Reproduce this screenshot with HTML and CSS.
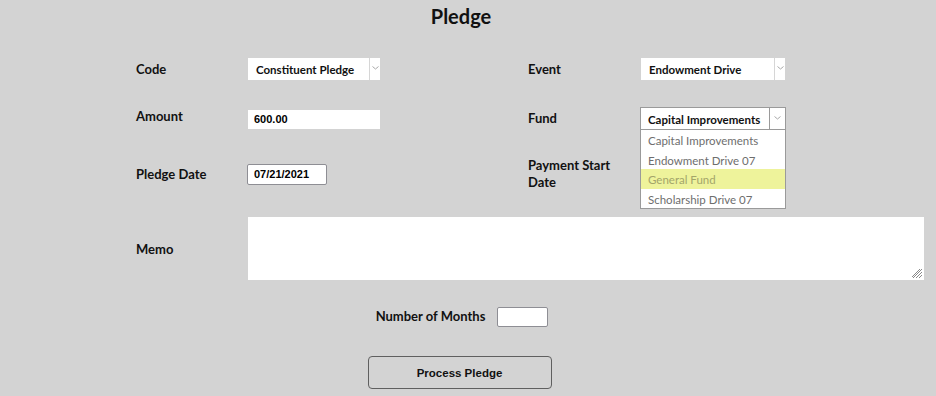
FILE: index.html
```html
<!DOCTYPE html>
<html lang="en">
<head>
    <meta charset="UTF-8">
    <title>Pledge</title>
    <link rel="stylesheet" href="styles.css">
</head>
<body>
    <div class="page">
        <h1 class="title">Pledge</h1>

        <!-- Code / Event -->
        <div class="row row-code">
            <div class="pair">
                <label class="label">Code</label>
                <div class="select select-code">
                    <span class="select-text">Constituent Pledge</span>
                    <span class="select-arrow"><svg width="7" height="4" viewBox="0 0 7 4"><path d="M0.5 0.5 L3.5 3 L6.5 0.5" fill="none" stroke="#a9a9a9" stroke-width="1"/></svg></span>
                </div>
            </div>
            <div class="pair">
                <label class="label">Event</label>
                <div class="select select-event">
                    <span class="select-text">Endowment Drive</span>
                    <span class="select-arrow"><svg width="7" height="4" viewBox="0 0 7 4"><path d="M0.5 0.5 L3.5 3 L6.5 0.5" fill="none" stroke="#a9a9a9" stroke-width="1"/></svg></span>
                </div>
            </div>
        </div>

        <!-- Amount / Fund -->
        <div class="row row-amount">
            <div class="pair">
                <label class="label label-high">Amount</label>
                <input class="text-input amount" type="text" value="600.00">
            </div>
            <div class="pair">
                <label class="label">Fund</label>
                <div class="fund-wrap">
                    <div class="select select-fund">
                        <span class="select-text">Capital Improvements</span>
                        <span class="select-arrow"><svg width="7" height="4" viewBox="0 0 7 4"><path d="M0.5 0.5 L3.5 3 L6.5 0.5" fill="none" stroke="#a9a9a9" stroke-width="1"/></svg></span>
                    </div>
                    <ul class="dropdown">
                        <li>Capital Improvements</li>
                        <li>Endowment Drive 07</li>
                        <li class="active">General Fund</li>
                        <li>Scholarship Drive 07</li>
                    </ul>
                </div>
            </div>
        </div>

        <!-- Pledge Date / Payment Start Date -->
        <div class="row row-date">
            <div class="pair">
                <label class="label">Pledge Date</label>
                <input class="text-input date" type="text" value="07/21/2021">
            </div>
            <div class="pair">
                <label class="label">Payment Start<br>Date</label>
            </div>
        </div>

        <!-- Memo -->
        <div class="row row-memo">
            <label class="label">Memo</label>
            <div class="memo-box">
                <textarea class="memo"></textarea>
                <svg class="grip" width="12" height="12" viewBox="0 0 12 12">
                    <path d="M11 2 L2 11 M11 5 L5 11 M11 8 L8 11 M9 2 L1 10" fill="none" stroke="#8a8a8a" stroke-width="1"/>
                </svg>
            </div>
        </div>

        <div class="months">
            <label class="label">Number of Months</label>
            <input class="text-input months-input" type="text">
        </div>

        <div class="actions">
            <button class="btn">Process Pledge</button>
        </div>
    </div>
</body>
</html>
```

FILE: styles.css
```css
/* Basic Reset */
* {
    margin: 0;
    padding: 0;
    box-sizing: border-box;
}

body {
    background-color: #d3d3d3;
    font-family: Lato, "DejaVu Sans", sans-serif;
    color: #111;
    width: 936px;
    height: 396px;
    overflow: hidden;
}

.page {
    width: 936px;
}

.title {
    text-align: center;
    font-size: 20px;
    font-weight: bold;
    line-height: 24px;
    padding-top: 4px;
    padding-right: 14px;
    height: 58px;
}

/* Form rows */
.row {
    display: flex;
    padding-left: 136px;
    align-items: center;
}

.row-code { height: 22px; }
.row-amount { height: 23px; margin-top: 27px; }
.row-date { height: 22px; margin-top: 33px; }
.row-memo { height: 63px; margin-top: 32px; }

.pair {
    display: flex;
    align-items: center;
    width: 392px;
    height: 100%;
}

.label {
    width: 112px;
    flex-shrink: 0;
    font-size: 13px;
    font-weight: bold;
    line-height: 17px;
}

.label-high {
    margin-top: -5px;
}

.row-memo .label {
    margin-top: 2px;
}

/* Selects */
.select {
    display: flex;
    background: #fff;
    height: 22px;
    font-size: 11.5px;
    font-weight: bold;
}

.select-text {
    flex: 1;
    padding-left: 8px;
    line-height: 24px;
    white-space: nowrap;
}

.select-arrow {
    width: 11px;
    border-left: 1px solid #d6d6d6;
    display: flex;
    justify-content: center;
    padding-top: 8px;
}

.select-code { width: 132px; }
.select-event { width: 144px; margin-left: 1px; }

.fund-wrap {
    position: relative;
}

.select-fund {
    width: 146px;
    height: 23px;
    border: 1px solid #9a9a9a;
}

.select-fund .select-text {
    padding-left: 7px;
}

.select-fund .select-arrow {
    width: 16px;
    border-left: 1px solid #9a9a9a;
}

.dropdown {
    position: absolute;
    top: 23px;
    left: 0;
    width: 146px;
    list-style: none;
    background: #fff;
    border: 1px solid #9a9a9a;
    border-top: none;
    z-index: 5;
}

.dropdown li {
    height: 19.5px;
    line-height: 21px;
    padding-left: 7px;
    font-size: 11.5px;
    color: #6e6e6e;
    white-space: nowrap;
}

.dropdown li.active {
    background: #eef39b;
    color: #a3a56a;
}

/* Inputs */
.text-input {
    background: #fff;
    font-family: "Liberation Sans", Arial, sans-serif;
    font-size: 11px;
    font-weight: bold;
    color: #000;
    outline: none;
}

.amount {
    width: 132px;
    height: 19px;
    border: none;
    padding-left: 6px;
    margin-top: 1px;
}

.date {
    width: 80px;
    height: 21px;
    border: 1px solid #8e8e94;
    border-radius: 2px;
    padding-left: 6px;
    margin-left: -1px;
}

.memo-box {
    position: relative;
    width: 676px;
    height: 63px;
}

.memo {
    display: block;
    width: 100%;
    height: 100%;
    border: none;
    background: #fff;
    resize: none;
    outline: none;
}

.grip {
    position: absolute;
    right: 1px;
    bottom: 1px;
}

/* Number of months */
.months {
    display: flex;
    justify-content: center;
    align-items: center;
    margin-top: 27px;
    padding-right: 12px;
    height: 20px;
    gap: 12px;
}

.months .label {
    width: auto;
    margin-top: -2px;
}

.months-input {
    width: 51px;
    height: 20px;
    border: 1px solid #8e8e94;
    border-radius: 2px;
}

/* Button */
.actions {
    display: flex;
    justify-content: center;
    margin-top: 29px;
    padding-right: 17px;
}

.btn {
    width: 184px;
    height: 33px;
    background: #d3d3d3;
    border: 1px solid #5f5f5f;
    border-radius: 4px;
    font-family: "Liberation Sans", Arial, sans-serif;
    font-size: 11.5px;
    font-weight: bold;
    color: #111;
}
```
